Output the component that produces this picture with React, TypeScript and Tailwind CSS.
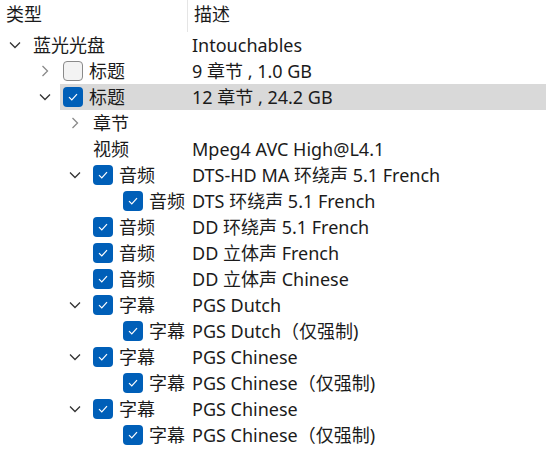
import React from "react";

type Row = {
  level: number;
  chevron?: "open" | "closed";
  check?: boolean;
  type: string;
  desc?: string;
  selected?: boolean;
};

const ROWS: Row[] = [
  { level: 0, chevron: "open", type: "蓝光光盘", desc: "Intouchables" },
  { level: 1, chevron: "closed", check: false, type: "标题", desc: "9 章节 , 1.0 GB" },
  { level: 1, chevron: "open", check: true, type: "标题", desc: "12 章节 , 24.2 GB", selected: true },
  { level: 2, chevron: "closed", type: "章节" },
  { level: 2, type: "视频", desc: "Mpeg4 AVC High@L4.1" },
  { level: 2, chevron: "open", check: true, type: "音频", desc: "DTS-HD MA 环绕声 5.1 French" },
  { level: 3, check: true, type: "音频", desc: "DTS 环绕声 5.1 French" },
  { level: 2, check: true, type: "音频", desc: "DD 环绕声 5.1 French" },
  { level: 2, check: true, type: "音频", desc: "DD 立体声 French" },
  { level: 2, check: true, type: "音频", desc: "DD 立体声 Chinese" },
  { level: 2, chevron: "open", check: true, type: "字幕", desc: "PGS Dutch" },
  { level: 3, check: true, type: "字幕", desc: "PGS Dutch（仅强制)" },
  { level: 2, chevron: "open", check: true, type: "字幕", desc: "PGS Chinese" },
  { level: 3, check: true, type: "字幕", desc: "PGS Chinese（仅强制)" },
  { level: 2, chevron: "open", check: true, type: "字幕", desc: "PGS Chinese" },
  { level: 3, check: true, type: "字幕", desc: "PGS Chinese（仅强制)" },
];

const INDENT = ["pl-0", "pl-[30px]", "pl-[60px]", "pl-[90px]"];

function Chevron({ dir }: { dir: "open" | "closed" }) {
  if (dir === "open") {
    return (
      <svg width="12" height="8" viewBox="0 0 12 8">
        <path d="M1 1.5 L6 6.5 L11 1.5" fill="none" stroke="#333" strokeWidth="1.3" />
      </svg>
    );
  }
  return (
    <svg width="8" height="12" viewBox="0 0 8 12">
      <path d="M1.5 1 L6.5 6 L1.5 11" fill="none" stroke="#8a8a8a" strokeWidth="1.3" />
    </svg>
  );
}

function Checkbox({ checked }: { checked: boolean }) {
  if (!checked) {
    return <div className="w-5 h-5 rounded-[4px] border border-[#8a8a8a] bg-[#f3f3f3] shrink-0" />;
  }
  return (
    <div className="w-5 h-5 rounded-[4px] bg-[#005fb8] flex items-center justify-center shrink-0">
      <svg width="12" height="10" viewBox="0 0 12 10">
        <path d="M2 5.2 L4.8 8 L10 2.2" fill="none" stroke="#fff" strokeWidth="1.2" />
      </svg>
    </div>
  );
}

export default function App() {
  return (
    <div
      className="w-[546px] h-[450px] bg-white text-[18px] leading-[26px] text-[#1b1b1b] overflow-hidden"
      style={{ fontFamily: '"Noto Sans", "Noto Sans CJK SC", sans-serif' }}
    >
      {/* header */}
      <div className="flex h-8">
        <div className="w-[188px] h-8 pl-[6px] pt-[1px] border-r border-[#e5e5e5]">类型</div>
        <div className="pl-[6px] pt-[1px]">描述</div>
      </div>

      {ROWS.map((r, i) => (
        <div key={i} className="flex h-[26px] items-center">
          <div className={`w-[192px] h-[26px] flex items-center shrink-0 ${INDENT[r.level]}`}>
            <div className="w-[30px] h-[26px] flex items-center justify-center shrink-0">
              {r.chevron && <Chevron dir={r.chevron} />}
            </div>
            <div
              className={`flex items-center gap-[6px] h-[26px] pl-[3px] whitespace-nowrap ${
                r.selected ? "bg-[#d9d9d9] flex-1" : ""
              }`}
            >
              {r.check !== undefined && <Checkbox checked={r.check} />}
              <span>{r.type}</span>
            </div>
          </div>
          <div
            className={`flex-1 h-[26px] flex items-center whitespace-nowrap ${
              r.selected ? "bg-[#d9d9d9]" : ""
            }`}
          >
            {r.desc}
          </div>
        </div>
      ))}
    </div>
  );
}
